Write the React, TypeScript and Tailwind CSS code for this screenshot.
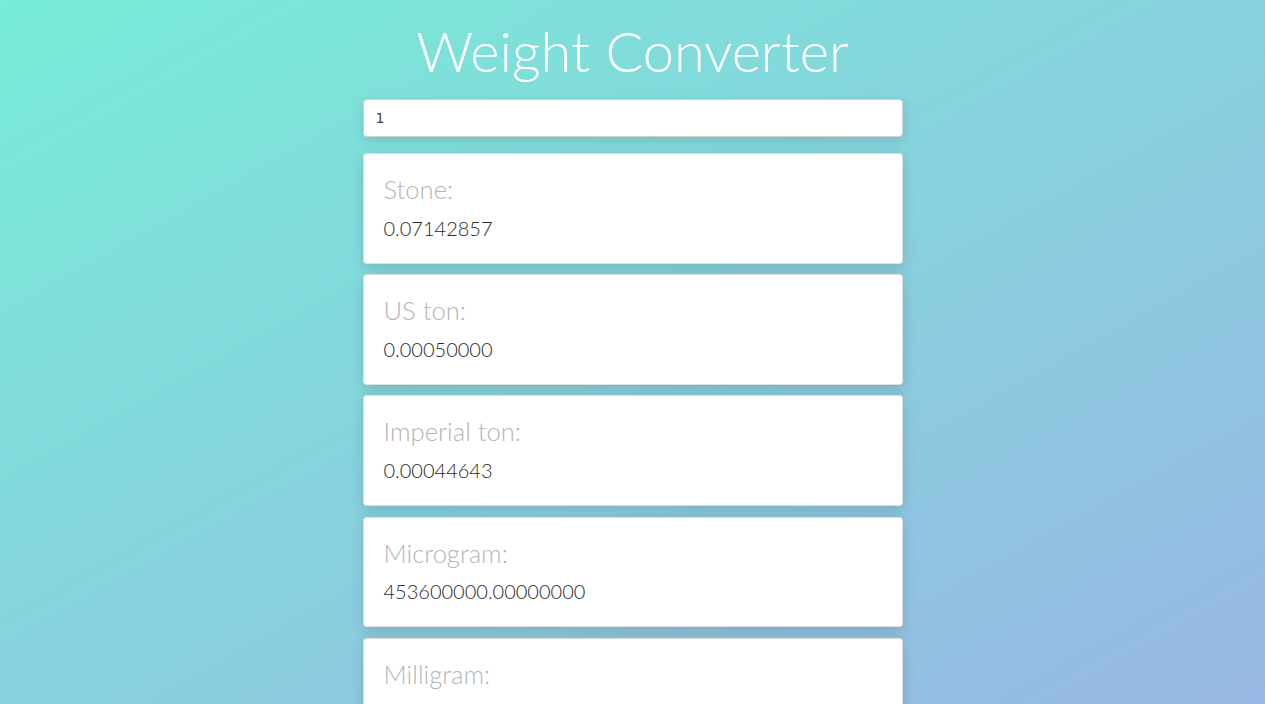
import React from "react";

const units: [string, string][] = [
  ["Stone:", "0.07142857"],
  ["US ton:", "0.00050000"],
  ["Imperial ton:", "0.00044643"],
  ["Microgram:", "453600000.00000000"],
  ["Milligram:", "453600.00000000"],
  ["Gram:", "453.60000000"],
  ["Kilogram:", "0.45360000"],
  ["Ounce:", "16.00000000"],
];

export default function App() {
  return (
    <div
      className="min-h-screen bg-fixed bg-[linear-gradient(to_bottom_right,#77ecd7,#98b7e4)]"
      style={{ fontFamily: "Lato, 'Open Sans', sans-serif" }}
    >
      <div className="mx-auto w-[540px] pt-[16.7px] pb-10">
        <h1 className="text-center text-[56px] font-light leading-[1.2] text-white">
          Weight Converter
        </h1>
        <input
          defaultValue="1"
          className="mt-[15px] block h-[38px] w-full rounded-[4px] border border-[#d0d0d0] bg-white px-3 text-[14px] text-[#444] shadow-[0_4px_12px_rgba(0,0,0,0.12)] outline-none"
          style={{ fontFamily: "'DejaVu Sans', sans-serif" }}
        />
        <div className="mt-4 flex flex-col gap-[10.6px]">
          {units.map(([label, value]) => (
            <div
              key={label}
              className="rounded-[4px] border border-[rgba(0,0,0,0.125)] bg-white p-5 shadow-[0_4px_14px_rgba(0,0,0,0.14)]"
            >
              <div className="mb-2 text-[25.6px] font-light leading-[1.2] text-[#b5b5b5]">
                {label}
              </div>
              <div className="text-[20px] font-light leading-[30px] text-[#2a2a2a]">
                {value}
              </div>
            </div>
          ))}
        </div>
      </div>
    </div>
  );
}
